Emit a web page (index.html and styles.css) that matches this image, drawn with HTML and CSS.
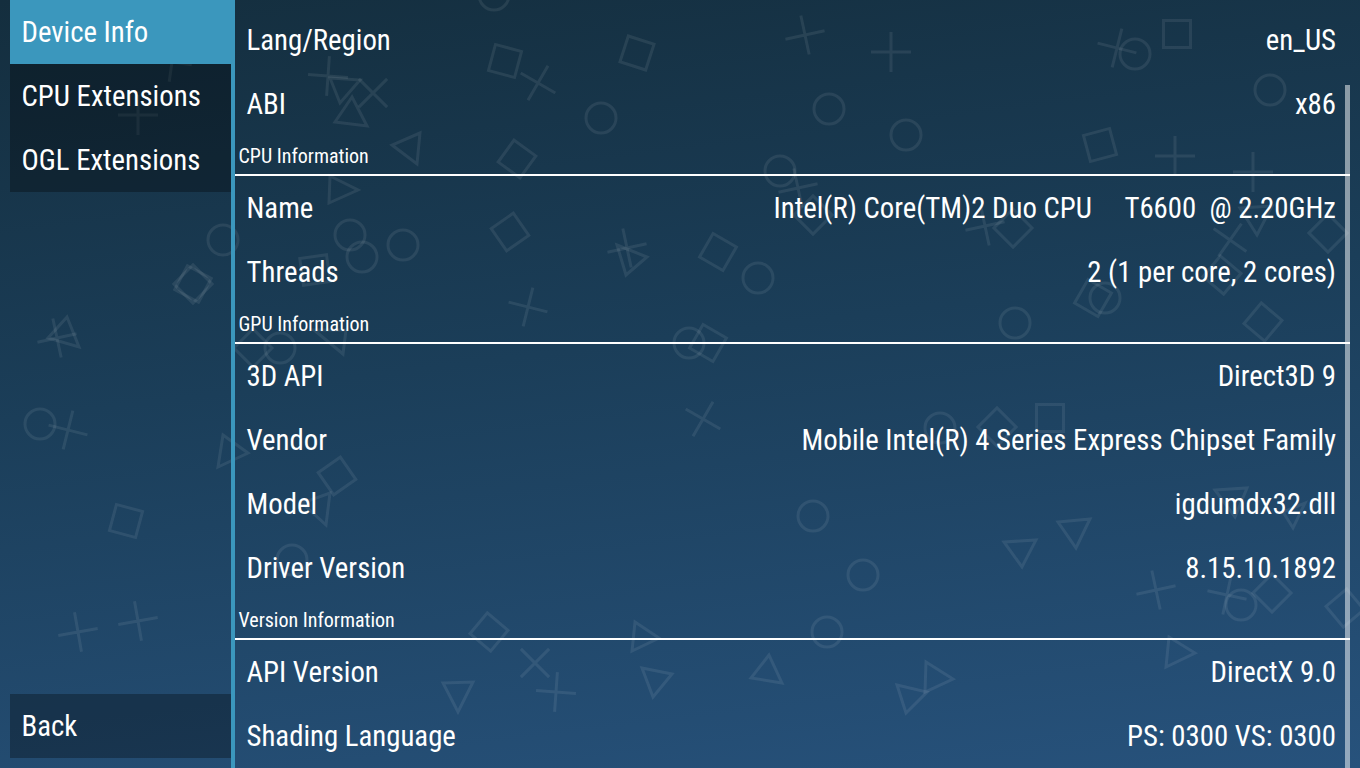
FILE: index.html
```html
<!DOCTYPE html>
<html lang="en">

<head>
  <meta charset="UTF-8" />
  <meta name="viewport" content="width=device-width, initial-scale=1.0" />
  <title>System Information</title>
  <link rel="stylesheet" href="styles.css">
</head>

<body>
  <svg class="bg-shapes" width="1360" height="768" viewBox="0 0 1360 768" aria-hidden="true">
    <defs>
      <path id="cross" d="M-20 0H20M0-20V20" />
      <rect id="square" x="-13.5" y="-13.5" width="27" height="27" />
      <circle id="ring" r="15" />
    </defs>

    <use href="#cross" transform="translate(138 115)" />
    <use href="#cross" transform="translate(172 62) rotate(8)" />
    <use href="#cross" transform="translate(328 76) rotate(4)" />
    <use href="#cross" transform="translate(373 93) rotate(45)" />
    <use href="#cross" transform="translate(538 83) rotate(30)" />
    <use href="#cross" transform="translate(805 35) rotate(-12)" />
    <use href="#cross" transform="translate(891 52)" />
    <use href="#cross" transform="translate(1117 48) rotate(14)" />
    <use href="#cross" transform="translate(1175 156)" />
    <use href="#cross" transform="translate(1253 172)" />
    <use href="#cross" transform="translate(798 188) rotate(-12)" />
    <use href="#cross" transform="translate(627 248) rotate(-12)" />
    <use href="#cross" transform="translate(985 226) rotate(-12)" />
    <use href="#cross" transform="translate(1230 240) rotate(35)" />
    <use href="#cross" transform="translate(528 307) rotate(14)" />
    <use href="#cross" transform="translate(57 338) rotate(-12)" />
    <use href="#cross" transform="translate(68 430) rotate(14)" />
    <use href="#cross" transform="translate(703 419) rotate(30)" />
    <use href="#cross" transform="translate(78 632) rotate(-10)" />
    <use href="#cross" transform="translate(138 621) rotate(-10)" />
    <use href="#cross" transform="translate(535 663) rotate(45)" />
    <use href="#cross" transform="translate(556 692) rotate(4)" />
    <use href="#cross" transform="translate(1156 590) rotate(-12)" />
    <use href="#cross" transform="translate(1227 595) rotate(12)" />

    <use href="#square" transform="translate(505 61) rotate(15)" />
    <use href="#square" transform="translate(637 53) rotate(18)" />
    <use href="#square" transform="translate(517 159) rotate(36)" />
    <use href="#square" transform="translate(1177 34)" />
    <use href="#square" transform="translate(1100 145) rotate(-15)" />
    <use href="#square" transform="translate(813 215) rotate(45)" />
    <use href="#square" transform="translate(510 232) rotate(-35)" />
    <use href="#square" transform="translate(718 252) rotate(30)" />
    <use href="#square" transform="translate(315 270) rotate(-8)" />
    <use href="#square" transform="translate(193 284) rotate(45)" />
    <use href="#square" transform="translate(193 284) rotate(28)" />
    <use href="#square" transform="translate(253 348) rotate(45)" />
    <use href="#square" transform="translate(708 343) rotate(30)" />
    <use href="#square" transform="translate(1013 228) rotate(45)" />
    <use href="#square" transform="translate(1222 275) rotate(40)" />
    <use href="#square" transform="translate(1328 233) rotate(45)" />
    <use href="#square" transform="translate(1093 298) rotate(30)" />
    <use href="#square" transform="translate(1263 322) rotate(40)" />
    <use href="#square" transform="translate(997 427) rotate(45)" />
    <use href="#square" transform="translate(1050 418)" />
    <use href="#square" transform="translate(126 521) rotate(15)" />
    <use href="#square" transform="translate(337 476) rotate(-35)" />
    <use href="#square" transform="translate(489 632) rotate(40)" />
    <use href="#square" transform="translate(1272 593) rotate(45)" />
    <use href="#square" transform="translate(1345 608) rotate(-40)" />

    <use href="#ring" transform="translate(494 -5)" />
    <use href="#ring" transform="translate(601 118)" />
    <use href="#ring" transform="translate(829 109)" />
    <use href="#ring" transform="translate(906 135)" />
    <use href="#ring" transform="translate(780 171)" />
    <use href="#ring" transform="translate(1135 54)" />
    <use href="#ring" transform="translate(1270 90)" />
    <use href="#ring" transform="translate(223 240)" />
    <use href="#ring" transform="translate(350 235)" />
    <use href="#ring" transform="translate(362 257)" />
    <use href="#ring" transform="translate(403 245)" />
    <use href="#ring" transform="translate(758 278)" />
    <use href="#ring" transform="translate(280 348)" />
    <use href="#ring" transform="translate(689 343)" />
    <use href="#ring" transform="translate(1015 323)" />
    <use href="#ring" transform="translate(1105 298)" />
    <use href="#ring" transform="translate(40 424)" />
    <use href="#ring" transform="translate(940 428)" />
    <use href="#ring" transform="translate(813 516)" />
    <use href="#ring" transform="translate(292 560)" />
    <use href="#ring" transform="translate(863 575)" />
    <use href="#ring" transform="translate(827 632)" />
    <use href="#ring" transform="translate(1241 605)" />

    <polygon points="330,78 360,80 340,103" />
    <polygon points="352,97 335,122 367,126" />
    <polygon points="420,133 392,145 417,164" />
    <polygon points="330,176 358,190 329,203" />
    <polygon points="67,317 79,347 48,338" />
    <polygon points="223,435 248,453 218,467" />
    <polygon points="330,493 326,525 302,503" />
    <polygon points="314,330 346,330 343,354" />
    <polygon points="617,245 647,257 626,275" />
    <polygon points="635,622 659,638 632,651" />
    <polygon points="642,668 672,674 653,697" />
    <polygon points="769,655 751,678 782,683" />
    <polygon points="897,685 927,692 906,713" />
    <polygon points="443,683 473,682 458,712" />
    <polygon points="1004,542 1036,540 1022,567" />
    <polygon points="1058,522 1090,519 1076,548" />
    <polygon points="1215,490 1247,488 1235,517" />
    <polygon points="1283,512 1305,503 1293,528" />
    <polygon points="1169,637 1195,653 1166,667" />
    <polygon points="926,662 953,679 925,692" />
    <polygon points="1240,208 1272,206 1257,235" />
  </svg>

  <div class="screen">
    <nav class="sidebar">
      <div class="tabs">
        <a class="tab tab-active">Device Info</a>
        <a class="tab">CPU Extensions</a>
        <a class="tab">OGL Extensions</a>
      </div>
      <a class="tab">Back</a>
    </nav>

    <main class="info-list">
      <div class="row"><span>Lang/Region</span><span>en_US</span></div>
      <div class="row"><span>ABI</span><span>x86</span></div>

      <h2 class="section">CPU Information</h2>
      <div class="row"><span>Name</span><span>Intel(R) Core(TM)2 Duo CPU     T6600  @ 2.20GHz</span></div>
      <div class="row"><span>Threads</span><span>2 (1 per core, 2 cores)</span></div>

      <h2 class="section">GPU Information</h2>
      <div class="row"><span>3D API</span><span>Direct3D 9</span></div>
      <div class="row"><span>Vendor</span><span>Mobile Intel(R) 4 Series Express Chipset Family</span></div>
      <div class="row"><span>Model</span><span>igdumdx32.dll</span></div>
      <div class="row"><span>Driver Version</span><span>8.15.10.1892</span></div>

      <h2 class="section">Version Information</h2>
      <div class="row"><span>API Version</span><span>DirectX 9.0</span></div>
      <div class="row"><span>Shading Language</span><span>PS: 0300 VS: 0300</span></div>

      <div class="scrollbar"></div>
    </main>
  </div>
</body>

</html>
```

FILE: styles.css
```css
html,
body {
  margin: 0;
  height: 100%;
  overflow: hidden;
}

body {
  position: relative;
  background: linear-gradient(173deg, #142e3e 0%, #1b3e59 45%, #27527c 100%);
  color: #fff;
  font-family: "Roboto Condensed", Roboto, "Liberation Sans", sans-serif;
}

.bg-shapes {
  position: absolute;
  left: 0;
  top: 0;
  fill: none;
  stroke: #fff;
  stroke-opacity: 0.08;
  stroke-width: 3;
}

.screen {
  position: relative;
  display: flex;
  height: 768px;
  padding: 0 10px;
  box-sizing: border-box;
}

.sidebar {
  display: flex;
  flex-direction: column;
  justify-content: space-between;
  width: 221px;
  padding-bottom: 10px;
  box-sizing: border-box;
  flex-shrink: 0;
}

.tabs {
  display: flex;
  flex-direction: column;
}

.tab {
  display: flex;
  align-items: center;
  height: 64px;
  padding: 0 0 0 11.5px;
  box-sizing: border-box;
  background: rgba(0, 0, 0, 0.3);
  font-size: 28.8px;
}

.tab-active {
  margin-right: -4px;
  background: #3b97bd;
}

.info-list {
  position: relative;
  flex: 1;
  padding-top: 8px;
  border-left: 4px solid #3b97bd;
}

.row {
  display: flex;
  justify-content: space-between;
  align-items: center;
  height: 64px;
  padding: 0 14px 1px 11.5px;
  box-sizing: border-box;
  font-size: 28.8px;
  white-space: pre;
}

.section {
  display: flex;
  align-items: center;
  height: 36px;
  margin: 0;
  padding: 2px 4px 0 3.5px;
  border-bottom: 2px solid #fff;
  font-size: 20px;
  font-weight: 400;
}

.scrollbar {
  position: absolute;
  right: 0;
  top: 85px;
  bottom: 0;
  width: 5px;
  background: rgba(255, 255, 255, 0.5);
}
```
